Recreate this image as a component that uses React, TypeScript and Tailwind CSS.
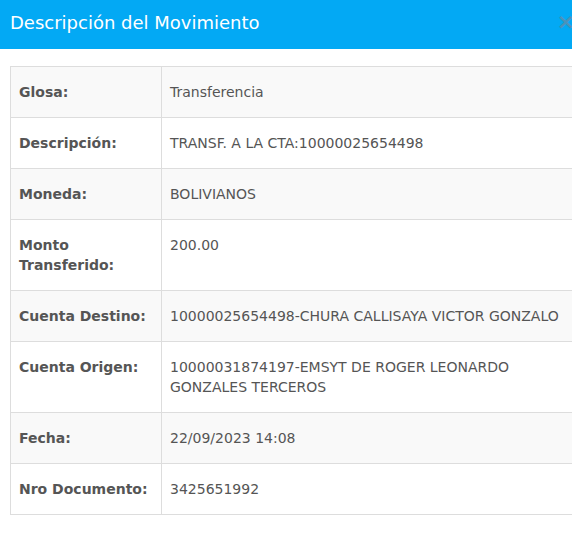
import React from "react";

const rows: { label: string[]; value: string }[] = [
  { label: ["Glosa:"], value: "Transferencia" },
  { label: ["Descripción:"], value: "TRANSF. A LA CTA:10000025654498" },
  { label: ["Moneda:"], value: "BOLIVIANOS" },
  { label: ["Monto", "Transferido:"], value: "200.00" },
  { label: ["Cuenta Destino:"], value: "10000025654498-CHURA CALLISAYA VICTOR GONZALO" },
  { label: ["Cuenta Origen:"], value: "10000031874197-EMSYT DE ROGER LEONARDO GONZALES TERCEROS" },
  { label: ["Fecha:"], value: "22/09/2023 14:08" },
  { label: ["Nro Documento:"], value: "3425651992" },
];

export default function App() {
  return (
    <div className="w-[572px] h-[546px] overflow-hidden bg-white" style={{ fontFamily: '"DejaVu Sans", Verdana, sans-serif' }}>
      <div className="w-[600px]">
        <div className="h-[49px] bg-[#03a9f4] flex items-center justify-between pl-[10px] pr-[25px] pb-[5px]">
          <span className="text-white text-[18px]">Descripción del Movimiento</span>
          <span className="text-[#4a93bb] text-[22px] leading-none font-bold">×</span>
        </div>
        <div className="pt-[17px] px-[10px]">
          <table className="w-[580px] border-collapse text-[14px] leading-[20px] text-[#555]">
            <tbody>
              {rows.map((r, i) => (
                <tr key={i} className={i % 2 === 0 ? "bg-[#f9f9f9]" : "bg-white"}>
                  <td className="w-[151px] border border-[#ddd] px-[8px] py-[15px] align-top font-bold">
                    {r.label.map((l, j) => (
                      <div key={j}>{l}</div>
                    ))}
                  </td>
                  <td className="border border-[#ddd] px-[8px] py-[15px] align-top">{r.value}</td>
                </tr>
              ))}
            </tbody>
          </table>
        </div>
      </div>
    </div>
  );
}
